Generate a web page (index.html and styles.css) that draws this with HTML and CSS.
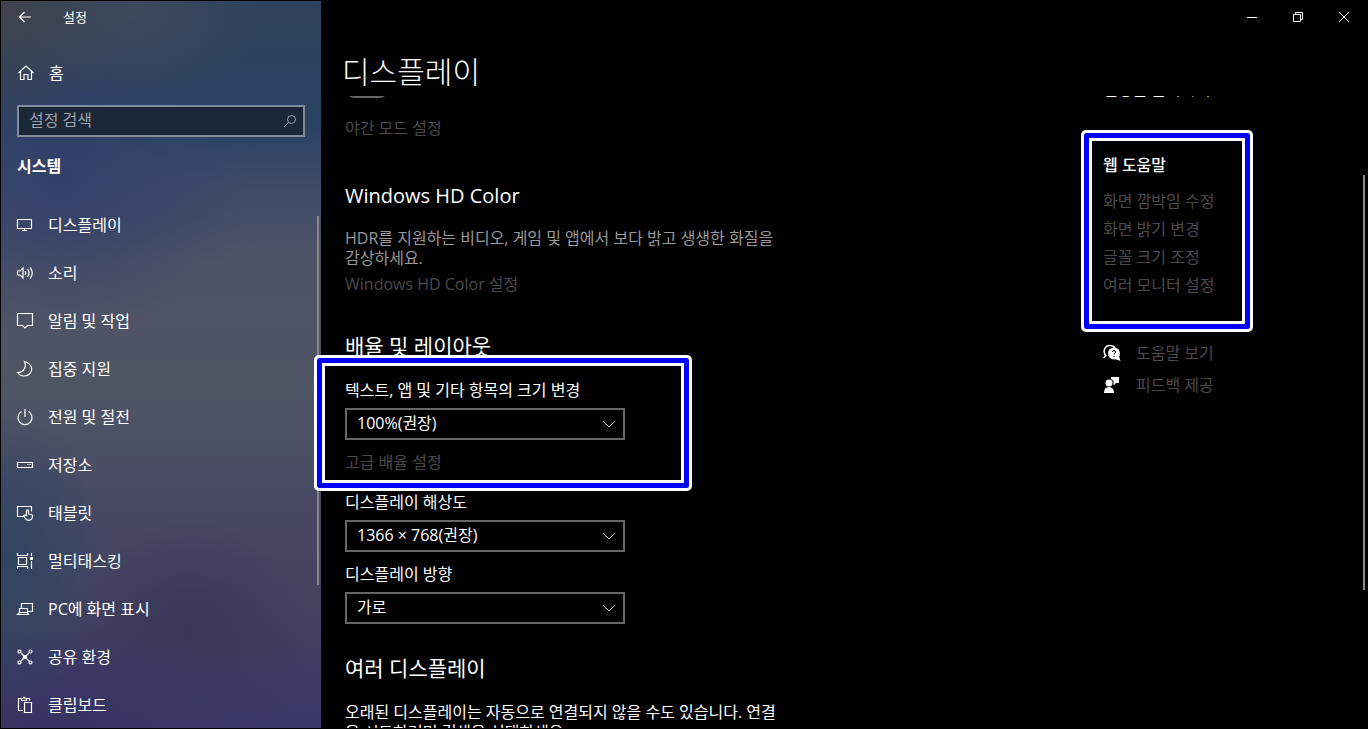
FILE: index.html
```html
<!DOCTYPE html>
<html lang="ko">
<head>
    <meta charset="UTF-8">
    <meta name="viewport" content="width=device-width, initial-scale=1.0">
    <title>설정</title>
    <link rel="stylesheet" href="styles.css">
</head>
<body>
    <div class="window">
        <aside class="sidebar">
            <div class="titlebar">
                <button class="back" aria-label="뒤로">
                    <svg width="14" height="12" viewBox="0 0 14 12"><path d="M13 6H1.5M6.5 1L1.5 6l5 5" /></svg>
                </button>
                <span>설정</span>
            </div>

            <a class="nav-item home" href="#">
                <svg width="18" height="18" viewBox="0 0 18 18"><path d="M1.500 9L9 2l7.500 7M3.500 7.500v8h3.500v-5h4v5h3.500v-8" /></svg>
                <span>홈</span>
            </a>

            <div class="search">
                <input type="text" placeholder="설정 검색" aria-label="설정 검색">
                <svg width="14" height="14" viewBox="0 0 14 14"><circle cx="8.500" cy="5.500" r="4" /><path d="M5.500 8.500L1 13" /></svg>
            </div>

            <h2>시스템</h2>

            <div class="nav-scroll">
                <nav>
                    <a class="nav-item" href="#">
                        <svg width="18" height="18" viewBox="0 0 18 18"><path d="M1.500 3.500h14v9h-14zM8.500 12.500v2M6 14.500h5" /></svg>
                        <span>디스플레이</span>
                    </a>
                    <a class="nav-item" href="#">
                        <svg width="18" height="18" viewBox="0 0 18 18"><path d="M1.500 7H4l3-3v10l-3-3H1.500zM9 7q1.500 2 0 4M11.500 5q3 4 0 8M14 3.500q4.500 5.500 0 11" /></svg>
                        <span>소리</span>
                    </a>
                    <a class="nav-item" href="#">
                        <svg width="18" height="18" viewBox="0 0 18 18"><path d="M1.500 1.500h15v12h-5L9 16l-2.500-2.500h-5z" /></svg>
                        <span>알림 및 작업</span>
                    </a>
                    <a class="nav-item" href="#">
                        <svg width="18" height="18" viewBox="0 0 18 18"><path d="M8.500 1.500C11 7 7.500 12.500 1.500 12.500c3 4.500 9.500 4.500 12.500 1 3.500-4.500 1-10.500-5.500-12z" /></svg>
                        <span>집중 지원</span>
                    </a>
                    <a class="nav-item" href="#">
                        <svg width="18" height="18" viewBox="0 0 18 18"><path d="M9 1v8M5.500 3.500a7 7 0 1 0 7 0" /></svg>
                        <span>전원 및 절전</span>
                    </a>
                    <a class="nav-item" href="#">
                        <svg width="18" height="18" viewBox="0 0 18 18"><path d="M1.500 6.500h15v5h-15zM11 8.500h1.500M13.500 8.500H15" /></svg>
                        <span>저장소</span>
                    </a>
                    <a class="nav-item" href="#">
                        <svg width="18" height="18" viewBox="0 0 18 18"><path d="M8 12.500H1.500v-10h14v5M10.500 12V6.500q1-1.500 2 0V10l3 .5q1 .3 1 1.500c0 5-5.500 5.500-7.500 2L7.500 11.500q1.500-1 3 .5" /></svg>
                        <span>태블릿</span>
                    </a>
                    <a class="nav-item" href="#">
                        <svg width="18" height="18" viewBox="0 0 18 18"><path d="M1.500 1v2.500h10V1M2.500 5.500h8v7h-8zM1.500 17v-2.500h10V17M15.500 1v3M15.500 9v8" /><path class="solid" d="M14 5h3v3h-3z" /></svg>
                        <span>멀티태스킹</span>
                    </a>
                    <a class="nav-item" href="#">
                        <svg width="18" height="18" viewBox="0 0 18 18"><path d="M5.500 8V3.500h11v8H12M3.500 8.500h8v4h-8zM1.500 14.500h11l-1-2h-8z" /></svg>
                        <span>PC에 화면 표시</span>
                    </a>
                    <a class="nav-item" href="#">
                        <svg width="18" height="18" viewBox="0 0 18 18"><path d="M5 5l8 8M13 5l-8 8" /><circle cx="3.500" cy="3.500" r="1.500" /><circle cx="14.500" cy="3.500" r="1.500" /><circle cx="3.500" cy="14.500" r="1.500" /><circle cx="14.500" cy="14.500" r="1.500" /><circle cx="9" cy="9" r="1.500" /></svg>
                        <span>공유 환경</span>
                    </a>
                    <a class="nav-item" href="#">
                        <svg width="18" height="18" viewBox="0 0 18 18"><path d="M7 14.500H2.500v-12H5M10.500 2.500h3V5M5.500 4.500v-2H7q1-3 2 0h1.500v2zM8.500 6.500h7v10h-7z" /></svg>
                        <span>클립보드</span>
                    </a>
                </nav>
                <div class="scrollbar"></div>
            </div>
        </aside>

        <main>
            <div class="caption-buttons">
                <button aria-label="최소화"><svg width="12" height="12" viewBox="0 0 12 12"><path d="M1 6.500h10" /></svg></button>
                <button aria-label="이전 크기로 복원"><svg width="12" height="12" viewBox="0 0 12 12"><path d="M1.500 3.500h7v7h-7zM3.500 3.500v-2h7v7h-2" /></svg></button>
                <button aria-label="닫기"><svg width="12" height="12" viewBox="0 0 12 12"><path d="M1 1l10 10M11 1L1 11" /></svg></button>
            </div>

            <h1>디스플레이</h1>

            <div class="viewport">
                <div class="content">
                    <section class="night">
                        <input class="toggle" type="checkbox" aria-label="야간 모드">
                        <a href="#">야간 모드 설정</a>
                    </section>

                    <section class="hd-color">
                        <h3>Windows HD Color</h3>
                        <p>HDR를 지원하는 비디오, 게임 및 앱에서 보다 밝고 생생한 화질을 감상하세요.</p>
                        <a href="#">Windows HD Color 설정</a>
                    </section>

                    <section class="scale">
                        <h3>배율 및 레이아웃</h3>
                        <div class="marked scale-mark">
                            <label for="scale">텍스트, 앱 및 기타 항목의 크기 변경</label>
                            <div class="select">
                                <select id="scale"><option>100%(권장)</option></select>
                                <svg width="14" height="8" viewBox="0 0 14 8"><path d="M1 1l6 6 6-6" /></svg>
                            </div>
                            <a href="#">고급 배율 설정</a>
                        </div>
                        <div class="field">
                            <label for="resolution">디스플레이 해상도</label>
                            <div class="select">
                                <select id="resolution"><option>1366 × 768(권장)</option></select>
                                <svg width="14" height="8" viewBox="0 0 14 8"><path d="M1 1l6 6 6-6" /></svg>
                            </div>
                        </div>
                        <div class="field">
                            <label for="orientation">디스플레이 방향</label>
                            <div class="select">
                                <select id="orientation"><option>가로</option></select>
                                <svg width="14" height="8" viewBox="0 0 14 8"><path d="M1 1l6 6 6-6" /></svg>
                            </div>
                        </div>
                    </section>

                    <section class="multi">
                        <h3>여러 디스플레이</h3>
                        <p>오래된 디스플레이는 자동으로 연결되지 않을 수도 있습니다. 연결<br>을 시도하려면 검색을 선택하세요.</p>
                    </section>
                </div>

                <div class="help">
                    <p class="tagline">설정을 즐기시게</p>
                    <div class="marked help-mark">
                        <h4>웹 도움말</h4>
                        <a href="#">화면 깜박임 수정</a>
                        <a href="#">화면 밝기 변경</a>
                        <a href="#">글꼴 크기 조정</a>
                        <a href="#">여러 모니터 설정</a>
                    </div>
                    <a class="help-link" href="#">
                        <svg width="18" height="18" viewBox="0 0 18 18"><path class="line" d="M2.500 11.500C-1 6 3 1.200 7 1.500q3.500 0 5 2.500M.5 14l3-3" /><circle class="solid" cx="11" cy="9.500" r="6" /><path class="solid" d="M12 15l4-3 1.500 5z" /><path class="mark" d="M9.500 8q0-1.500 1.500-1.500T12.500 8c0 1.500-1.500 1-1.500 2.500M11 12v1" /></svg>
                        <span>도움말 보기</span>
                    </a>
                    <a class="help-link" href="#">
                        <svg width="18" height="18" viewBox="0 0 18 18"><circle class="solid" cx="6" cy="7" r="3.500" /><path class="solid" d="M1 17q0-6 5-6t5 6zM8 1h8v6h-3l-2.500 2.500V5L8 3z" /></svg>
                        <span>피드백 제공</span>
                    </a>
                </div>
            </div>
            <div class="scrollbar"></div>
        </main>
    </div>
</body>
</html>
```

FILE: styles.css
```css
* {
    box-sizing: border-box;
    margin: 0;
    padding: 0;
}

body {
    background: #000;
    color: #fff;
    font-family: "Open Sans", "Noto Sans CJK KR", sans-serif;
    font-size: 16px;
    line-height: 20px;
}

a {
    color: inherit;
    text-decoration: none;
}

button,
input,
select {
    font: inherit;
    color: inherit;
    background: none;
    border: 0;
    border-radius: 0;
    appearance: none;
}

svg {
    flex: none;
    fill: none;
    stroke: #fff;
}

.window {
    display: flex;
    height: 100vh;
    padding: 1px;
    overflow: hidden;
}

/* sidebar */
.sidebar {
    display: flex;
    flex-direction: column;
    flex: none;
    width: 320px;
    background:
        radial-gradient(circle at 0 0, #41444d 0, transparent 130px),
        radial-gradient(ellipse 130px 90px at 130px 10px, #3e4a5c, transparent),
        radial-gradient(ellipse 190px 150px at 60px 180px, #33406a, transparent),
        radial-gradient(ellipse 120px 110px at 190px 630px, #38375a, transparent),
        radial-gradient(ellipse 110px 150px at 0 560px, #2f4563, transparent),
        radial-gradient(ellipse 240px 100px at 60px 720px, #373462, transparent),
        linear-gradient(#2f415c 0, #2b4262 17%, #404c69 26%, #4f5366 36%, #4e5565 54%, #474863 72%, #43425f 84%, #393767 100%);
}

.titlebar {
    display: flex;
    align-items: center;
    height: 32px;
    font-size: 13px;
}

.back {
    display: flex;
    width: 62px;
    padding-left: 17px;
}

.back svg,
.nav-item svg {
    stroke-width: 1.2;
}

.nav-item {
    display: flex;
    align-items: center;
    gap: 14px;
    height: 48px;
    padding-left: 15px;
}

.home {
    margin: 16px 0 8px;
    padding-left: 16px;
}

.search {
    display: flex;
    align-items: center;
    height: 32px;
    margin: 0 16px;
    padding: 0 6px 0 10px;
    border: 2px solid #818b9a;
    background: #1b2637;
}

.search input {
    flex: 1;
    min-width: 0;
    padding-bottom: 2px;
    outline: 0;
}

.search input::placeholder {
    color: #9ba2ac;
    opacity: 1;
}

.search svg {
    stroke: #9ba2ac;
}

h2 {
    margin: 19px 16px 25px;
    font-size: 16px;
    line-height: 20px;
}

.nav-scroll {
    display: flex;
    flex: 1;
    min-height: 0;
    overflow: hidden;
}

nav {
    flex: 1;
}

.scrollbar {
    flex: none;
    width: 2px;
    background: #888;
}

.nav-scroll .scrollbar {
    height: 70%;
    margin: 15px 2px 0 0;
}

/* main pane */
main {
    position: relative;
    display: flex;
    flex-direction: column;
    flex: 1;
    min-width: 0;
}

.caption-buttons {
    display: flex;
    justify-content: flex-end;
    height: 32px;
}

.caption-buttons button {
    display: flex;
    align-items: center;
    justify-content: center;
    width: 46px;
}

h1 {
    padding: 19px 0 4px 21px;
    font-size: 30px;
    font-weight: 300;
    line-height: 40px;
}

/* reaches over the sidebar edge so the callout frame is not cut */
.viewport {
    display: flex;
    flex: 1;
    min-height: 0;
    margin-left: -8px;
    padding-left: 32px;
    overflow: hidden;
}

main > .scrollbar {
    position: absolute;
    top: 24%;
    right: 2px;
    height: 57%;
}

.content {
    flex: 1;
}

.content a,
.help a {
    color: #4a4a4a;
}

.toggle {
    display: block;
    width: 44px;
    height: 20px;
    margin: -18px 0 20px;
    border: 2px solid #666;
    border-radius: 10px;
}

.night a,
.hd-color a {
    display: block;
}

h3 {
    font-size: 21px;
    font-weight: 400;
    line-height: 28px;
}

.hd-color {
    margin-top: 44px;
}

.hd-color h3 {
    font-weight: 500;
    font-size: 20px;
}

.hd-color p {
    max-width: 448px;
    margin: 18px 0 6px;
    color: #999;
    word-break: keep-all;
}

.scale {
    margin-top: 38px;
}

/* blue callout frame with a white edge on both sides */
.marked {
    position: relative;
}

.marked::before {
    content: "";
    position: absolute;
    border: 3px solid #fff;
    border-radius: 5px;
    box-shadow: inset 0 0 0 5px #00f, inset 0 0 0 8px #fff;
    pointer-events: none;
}

.scale-mark {
    width: 338px;
    margin-top: 20px;
}

.scale-mark::before {
    inset: -25px -9px -19px -31px;
}

.scale label {
    display: block;
    margin-bottom: 8px;
}

.scale-mark a {
    display: block;
    margin-top: 12px;
}

.select {
    position: relative;
    width: 280px;
}

.select select {
    display: block;
    width: 100%;
    height: 32px;
    padding: 0 0 2px 10px;
    border: 2px solid #666;
}

.select svg {
    position: absolute;
    top: 12px;
    right: 9px;
    stroke: #bbb;
    pointer-events: none;
}

.field {
    margin-top: 20px;
}

.field + .field {
    margin-top: 12px;
}

.multi {
    margin-top: 30px;
}

.multi p {
    margin-top: 20px;
    white-space: nowrap;
}

/* help column */
.help {
    flex: none;
    width: 264px;
}

.tagline {
    margin: -17px 0 56px;
}

.help-mark {
    width: 132px;
    margin-bottom: 38px;
}

.help-mark::before {
    inset: -25px -18px -33px -22px;
}

h4 {
    margin-bottom: 12px;
    font-size: 16px;
    font-weight: 500;
    line-height: 20px;
}

.help-mark a {
    display: block;
    padding: 4px 0;
    white-space: nowrap;
}

.help-link {
    display: flex;
    align-items: center;
    gap: 15px;
    height: 32px;
}

.solid {
    fill: #fff;
    stroke: none;
}

.line {
    stroke-width: 1.5;
}

.mark {
    stroke: #000;
}
```
